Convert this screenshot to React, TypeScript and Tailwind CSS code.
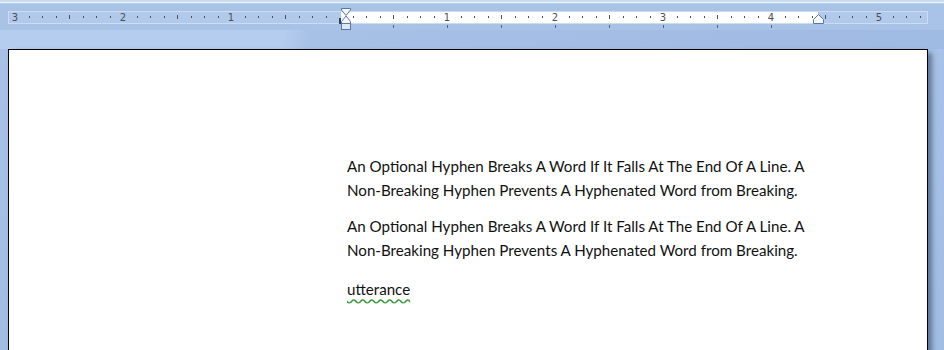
const INCH = 108;
const ORIGIN = 339;

function Ruler() {
  const marks: { x: number; kind: "dot" | "half" | "num"; label?: number }[] = [];
  for (let i = -24; i <= 47; i++) {
    const x = ORIGIN + (i * INCH) / 8;
    if (x < 12 || x > 924) continue;
    if (i === 0) continue;
    if (i % 8 === 0) marks.push({ x, kind: "num", label: Math.abs(i / 8) });
    else if (i % 4 === 0) marks.push({ x, kind: "half" });
    else marks.push({ x, kind: "dot" });
  }
  const tabs: number[] = [];
  for (let x = ORIGIN + INCH / 2; x < 818; x += INCH / 2) tabs.push(x);

  return (
    <div className="relative h-[30px] pt-[11px] pl-[8px]">
      {/* ruler bar: margin / text area / margin */}
      <div className="flex w-[920px] h-[13px] border border-[#cddcf1] bg-[#b1c9ea]">
        <div className="w-[332px]" />
        <div className="w-[477px] bg-white" />
        <div className="flex-1" />
      </div>
      {/* scale marks */}
      {marks.map((m, idx) =>
        m.kind === "num" ? (
          <span
            key={idx}
            className="absolute top-[11px] w-[10px] -ml-[5px] text-center text-[10px] leading-[13px] text-[#4b4f57] font-['DejaVu_Sans',sans-serif]"
            style={{ left: Math.round(m.x) }}
          >
            {m.label}
          </span>
        ) : m.kind === "half" ? (
          <span key={idx} className="absolute top-[15px] w-px h-[4px] bg-[#4b4f57]" style={{ left: Math.round(m.x) }} />
        ) : (
          <span key={idx} className="absolute top-[16px] w-px h-[2px] bg-[#4b4f57]" style={{ left: Math.round(m.x) }} />
        )
      )}
      {tabs.map((x, i) => (
        <span key={i} className="absolute top-[25px] w-px h-[3px] bg-[#5d6470]" style={{ left: Math.round(x) }} />
      ))}
      {/* margin corner */}
      <span className="absolute left-[339px] top-[18px] w-[2px] h-[6px] bg-[#2f4163]" />
      <span className="absolute left-[339px] top-[22px] w-[5px] h-[2px] bg-[#2f4163]" />
      {/* left indent hourglass */}
      <svg className="absolute left-[341px] top-[8px]" width="10" height="22" viewBox="0 0 10 22">
        <path d="M0.5 0.5 H9.5 V2 L5 7.5 L0.5 2 Z" fill="#f4f7fc" stroke="#5a78a6" />
        <path d="M5 8 L9.5 13.5 V15.5 H0.5 V13.5 Z" fill="#f4f7fc" stroke="#5a78a6" />
        <rect x="0.5" y="15.5" width="9" height="6" fill="#dfe8f5" stroke="#5a78a6" />
      </svg>
      {/* right indent */}
      <svg className="absolute left-[813px] top-[14px]" width="11" height="10" viewBox="0 0 11 10">
        <path d="M5.5 0.5 L10.5 5.5 V9.5 H0.5 V5.5 Z" fill="#f4f7fc" stroke="#5a78a6" />
      </svg>
    </div>
  );
}

export default function App() {
  const lines = [
    "An Optional Hyphen Breaks A Word If It Falls At The End Of A Line. A",
    "Non-Breaking Hyphen Prevents A Hyphenated Word from Breaking.",
  ];
  return (
    <div className="w-[944px] h-[350px] overflow-hidden bg-[linear-gradient(180deg,#a9c3e7_0%,#a2bde4_100%)]">
      {/* top strip */}
      <div className="h-[2px] bg-[#c9dcf2]" />
      <div className="h-px bg-[#e6f4fb]" />
      <div className="h-px bg-[#b8cdea]" />
      <div className="-mt-[4px]">
        <Ruler />
      </div>
      {/* lighter band behind the page top */}
      <div className="h-[19px] bg-[linear-gradient(100deg,#b5cdee_0%,#b5cdee_30%,#a6c0e6_33%,#9fbae3_100%)]" />
      {/* page */}
      <div className="flex pl-[8px]">
        <div className="w-[920px] h-[320px] bg-white border border-black shadow-[4px_4px_5px_rgba(40,55,90,0.55)] pl-[338px] pt-[104px] font-['Lato',sans-serif] text-[15.15px] text-[#111] leading-[24px]">
          {[0, 1].map((p) => (
            <div key={p} className="mb-[12px]">
              {lines.map((l) => (
                <div key={l} className="whitespace-nowrap">
                  {l}
                </div>
              ))}
            </div>
          ))}
          <div className="pt-[3px]">
            <span className="underline decoration-wavy decoration-[#3a9a3a] underline-offset-[3px]">utterance</span>
          </div>
        </div>
      </div>
    </div>
  );
}
